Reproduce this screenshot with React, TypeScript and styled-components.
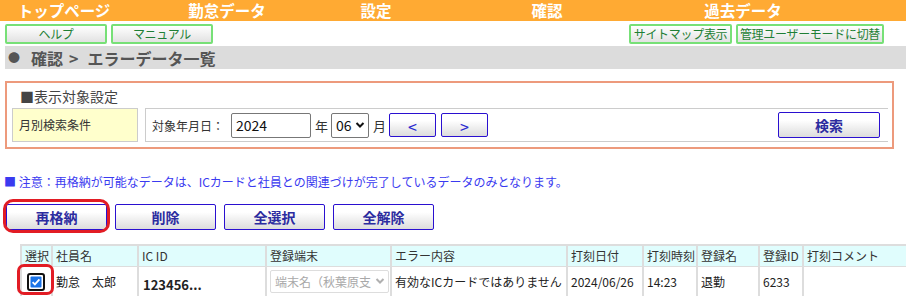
import React from "react";
import styled, { createGlobalStyle } from "styled-components";

const GlobalStyle = createGlobalStyle`
  body {
    margin: 0;
    overflow: hidden;
    background: #fff;
    font-family: "Noto Sans CJK JP", "Noto Sans", sans-serif;
    color: #222;
  }
`;

const Page = styled.div`
  width: 906px;
  height: 296px;
  overflow: hidden;
`;

const NavBar = styled.div`
  display: flex;
  align-items: center;
  height: 21px;
  background: #ffaa33;
`;

const NavItem = styled.div<{ $w: number }>`
  width: ${(p) => p.$w}px;
  text-align: center;
  color: #fff;
  font-size: 15.5px;
  font-weight: bold;
  line-height: 21px;
  margin-top: -1px;
`;

const SubBar = styled.div`
  display: flex;
  align-items: center;
  gap: 4px;
  height: 25px;
  padding: 0 22px 0 5px;
  box-sizing: border-box;
`;

const Spacer = styled.div`
  flex: 1;
`;

const GreenButton = styled.button<{ $w: number }>`
  width: ${(p) => p.$w}px;
  height: 20px;
  padding: 0;
  border: 2px solid #77e077;
  border-radius: 2px;
  background: linear-gradient(#ffffff, #e2e2e2);
  color: #1f7f35;
  font-family: inherit;
  font-size: 12px;
  line-height: 14px;
  white-space: nowrap;
  letter-spacing: -0.3px;
`;

const Breadcrumb = styled.div`
  display: flex;
  align-items: center;
  margin-left: 5px;
  height: 23px;
  background: #dcdcdc;
  color: #555;
  font-size: 16px;
  font-weight: bold;
  padding-left: 3px;
`;

const Crumb = styled.span<{ $ml: number; $small?: boolean }>`
  margin-left: ${(p) => p.$ml}px;
  font-size: ${(p) => (p.$small ? 12 : 16)}px;
`;

const SectionBox = styled.div`
  margin: 12px 12px 0 5px;
  height: 68px;
  box-sizing: border-box;
  border: 2px solid #ed9a7c;
  padding: 0 4px 0 5px;
`;

const SectionTitle = styled.div`
  height: 25px;
  padding-left: 8px;
  font-size: 14px;
  line-height: 26px;
  color: #444;
`;

const CondRow = styled.div`
  display: flex;
  gap: 7px;
  height: 34px;
`;

const CondLabel = styled.div`
  width: 126px;
  box-sizing: border-box;
  border: 1px solid #cccccc;
  background: #ffffcc;
  font-size: 12px;
  line-height: 32px;
  padding-left: 6px;
  color: #333;
`;

const CondBody = styled.div`
  flex: 1;
  display: flex;
  align-items: center;
  border: 1px solid #cccccc;
  border-right: none;
  padding: 0 8px 0 6px;
  font-size: 12px;
  color: #333;
`;

const Label = styled.span<{ $ml?: number }>`
  margin: 0 3px 0 ${(p) => p.$ml ?? 0}px;
  font-size: ${(p) => (p.$ml ? 13 : 12)}px;
`;

const TextInput = styled.div`
  width: 80px;
  height: 25px;
  box-sizing: border-box;
  border: 1px solid #777;
  border-radius: 2px;
  margin-left: 4px;
  padding-left: 4px;
  font-size: 14px;
  line-height: 23px;
  color: #111;
`;

const SelectBox = styled.div<{ $w: number; $muted?: boolean }>`
  display: flex;
  align-items: center;
  justify-content: space-between;
  width: ${(p) => p.$w}px;
  height: ${(p) => (p.$muted ? 23 : 25)}px;
  box-sizing: border-box;
  border: 1px solid ${(p) => (p.$muted ? "#dddddd" : "#777")};
  border-radius: 2px;
  padding: 0 3px 0 4px;
  font-size: ${(p) => (p.$muted ? 12 : 14)}px;
  color: ${(p) => (p.$muted ? "#a8a8a8" : "#111")};
  overflow: hidden;
  white-space: nowrap;
  background: #fff;
`;

const Chevron = ({ color }: { color: string }) => (
  <svg width="10" height="8" viewBox="0 0 10 8">
    <path d="M1.5 2 L5 5.5 L8.5 2" fill="none" stroke={color} strokeWidth="2" />
  </svg>
);

const BlueButton = styled.button<{ $w: number; $h: number; $ring?: boolean }>`
  position: relative;
  width: ${(p) => p.$w}px;
  height: ${(p) => p.$h}px;
  padding: 0;
  border: 1px solid #2a10d0;
  border-radius: 2px;
  background: linear-gradient(#ffffff 30%, #dcdcdc);
  color: #2c2ca0;
  font-family: inherit;
  font-size: 14px;
  font-weight: bold;
  &::after {
    content: "";
    display: ${(p) => (p.$ring ? "block" : "none")};
    position: absolute;
    inset: -6px -4px -4px -4px;
    border: 3px solid #e21c24;
    border-radius: 10px;
  }
`;

const ArrowButton = styled(BlueButton)`
  margin-left: 5px;
  font-weight: normal;
  font-size: 16px;
  color: #2a2ad0;
`;

const Notice = styled.div`
  margin: 25px 0 0 4px;
  font-size: 12px;
  line-height: 15px;
  color: #3a3af0;
`;

const ActionRow = styled.div`
  display: flex;
  gap: 8px;
  margin: 15px 0 0 6px;
`;

const TableWrap = styled.div`
  margin: 14px 0 0 20px;
`;

const Table = styled.table`
  border-collapse: collapse;
  table-layout: fixed;
  width: 960px;
  font-size: 12px;
`;

const Th = styled.th<{ $w: number }>`
  box-sizing: border-box;
  width: ${(p) => p.$w}px;
  height: 21px;
  background: #e0fdfd;
  border: 2px solid #dddddd;
  border-bottom-width: 1px;
  font-weight: normal;
  text-align: left;
  padding: 0 0 0 3px;
  color: #333;
  white-space: nowrap;
  overflow: hidden;
`;

const Tr = styled.tr<{ $alt?: boolean }>`
  background: ${(p) => (p.$alt ? "#ffffdd" : "#ffffff")};
`;

const Td = styled.td<{ $bold?: boolean }>`
  height: 23px;
  border: 2px solid #dddddd;
  border-top-width: 1px;
  padding: ${(p) => (p.$bold ? "6px 0 0 4px" : "0 0 0 3px")};
  font-size: ${(p) => (p.$bold ? 13 : 12)}px;
  font-weight: ${(p) => (p.$bold ? "bold" : "normal")};
  white-space: nowrap;
  overflow: hidden;
  color: #222;
`;

const CheckCell = styled.td`
  position: relative;
  height: 23px;
  border: 2px solid #dddddd;
  border-top-width: 1px;
  padding: 0;
  &::after {
    content: "";
    position: absolute;
    left: -5px;
    top: -3px;
    width: 31px;
    height: 25px;
    border: 3px solid #e21c24;
    border-radius: 7px;
  }
`;

const CheckMark = () => (
  <svg width="18" height="18" viewBox="0 0 18 18" style={{ display: "block", margin: "2px 0 0 5px" }}>
    <rect x="1" y="1" width="16" height="16" rx="2" fill="#fff" stroke="#111" strokeWidth="2" />
    <rect x="3.5" y="3.5" width="11" height="11" rx="1" fill="#1a73e8" />
    <path d="M5.6 9.2 L7.9 11.4 L12.4 6.4" fill="none" stroke="#fff" strokeWidth="1.8" />
  </svg>
);

const navItems: [string, number][] = [
  ["トップページ", 128],
  ["勤怠データ", 198],
  ["設定", 100],
  ["確認", 242],
  ["過去データ", 150],
];

const columns: [string, number][] = [
  ["選択", 31],
  ["社員名", 86],
  ["IC ID", 128],
  ["登録端末", 125],
  ["エラー内容", 176],
  ["打刻日付", 76],
  ["打刻時刻", 54],
  ["登録名", 62],
  ["登録ID", 44],
  ["打刻コメント", 178],
];

const App: React.FC = () => {
  return (
    <Page>
      <GlobalStyle />
      <NavBar>
        {navItems.map(([label, w]) => (
          <NavItem key={label} $w={w}>
            {label}
          </NavItem>
        ))}
      </NavBar>
      <SubBar>
        <GreenButton $w={102}>ヘルプ</GreenButton>
        <GreenButton $w={102}>マニュアル</GreenButton>
        <Spacer />
        <GreenButton $w={103}>サイトマップ表示</GreenButton>
        <GreenButton $w={148}>管理ユーザーモードに切替</GreenButton>
      </SubBar>
      <Breadcrumb>
        <Crumb $ml={0} $small>●</Crumb>
        <Crumb $ml={11}>確認</Crumb>
        <Crumb $ml={6}>&gt;</Crumb>
        <Crumb $ml={9}>エラーデータ一覧</Crumb>
      </Breadcrumb>

      <SectionBox>
        <SectionTitle>■表示対象設定</SectionTitle>
        <CondRow>
          <CondLabel>月別検索条件</CondLabel>
          <CondBody>
            <Label>対象年月日：</Label>
            <TextInput>2024</TextInput>
            <Label $ml={4}>年</Label>
            <SelectBox $w={38}>
              06
              <Chevron color="#111" />
            </SelectBox>
            <Label $ml={4}>月</Label>
            <ArrowButton $w={47} $h={24} style={{ marginLeft: 0 }}>
              &lt;
            </ArrowButton>
            <ArrowButton $w={47} $h={24}>
              &gt;
            </ArrowButton>
            <Spacer />
            <BlueButton $w={102} $h={26}>
              検索
            </BlueButton>
          </CondBody>
        </CondRow>
      </SectionBox>

      <Notice>■ 注意：再格納が可能なデータは、ICカードと社員との関連づけが完了しているデータのみとなります。</Notice>

      <ActionRow>
        <BlueButton $w={101} $h={26} $ring>
          再格納
        </BlueButton>
        <BlueButton $w={101} $h={26}>
          削除
        </BlueButton>
        <BlueButton $w={101} $h={26}>
          全選択
        </BlueButton>
        <BlueButton $w={101} $h={26}>
          全解除
        </BlueButton>
      </ActionRow>

      <TableWrap>
        <Table>
          <thead>
            <tr>
              {columns.map(([label, w]) => (
                <Th key={label} $w={w}>
                  {label}
                </Th>
              ))}
            </tr>
          </thead>
          <tbody>
            <Tr>
              <CheckCell>
                <CheckMark />
              </CheckCell>
              <Td>勤怠　太郎</Td>
              <Td $bold>123456...</Td>
              <Td>
                <SelectBox $w={119} $muted>
                  端末名（秋葉原支
                  <Chevron color="#b0b0b0" />
                </SelectBox>
              </Td>
              <Td>有効なICカードではありません</Td>
              <Td>2024/06/26</Td>
              <Td>14:23</Td>
              <Td>退勤</Td>
              <Td>6233</Td>
              <Td />
            </Tr>
            <Tr $alt>
              <Td />
              <Td />
              <Td />
              <Td>
                <SelectBox $w={119} $muted />
              </Td>
              <Td />
              <Td />
              <Td />
              <Td />
              <Td />
              <Td />
            </Tr>
          </tbody>
        </Table>
      </TableWrap>
    </Page>
  );
};

export default App;
